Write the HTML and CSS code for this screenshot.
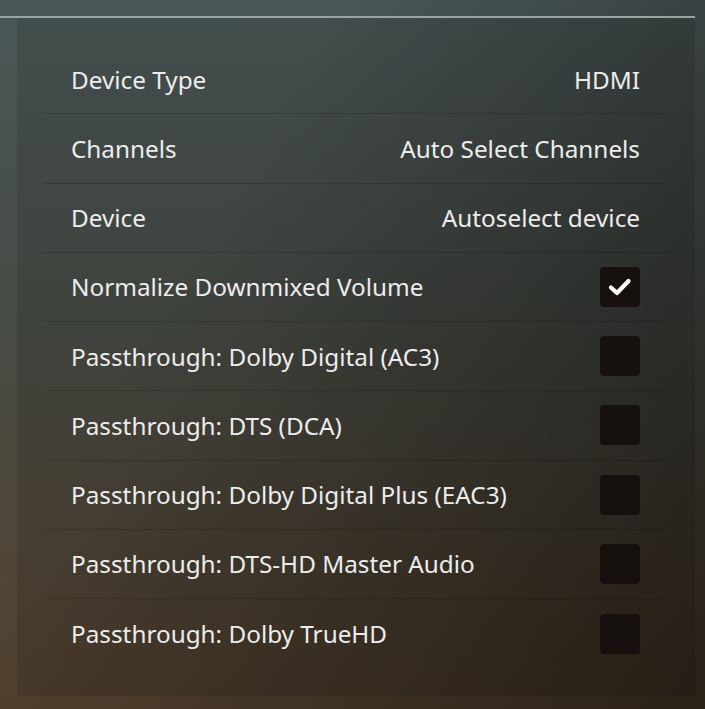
FILE: index.html
```html
<!DOCTYPE html>
<html>
<head>
<meta charset="utf-8">
<link rel="stylesheet" href="styles.css">
</head>
<body>
<div class="screen">
  <div class="topline"></div>
  <div class="panel">
    <div class="list">
      <div class="row"><span class="label">Device Type</span><span class="value">HDMI</span></div>
      <div class="row"><span class="label">Channels</span><span class="value">Auto Select Channels</span></div>
      <div class="row"><span class="label">Device</span><span class="value">Autoselect device</span></div>
      <div class="row"><span class="label">Normalize Downmixed Volume</span>
        <span class="check">
          <svg width="28" height="28" viewBox="0 0 28 28"><path d="M5 14.5 L11 20 L22.5 8" fill="none" stroke="#fff" stroke-width="4.2" stroke-linecap="round" stroke-linejoin="round"/></svg>
        </span>
      </div>
      <div class="row"><span class="label">Passthrough: Dolby Digital (AC3)</span><span class="check"></span></div>
      <div class="row"><span class="label">Passthrough: DTS (DCA)</span><span class="check"></span></div>
      <div class="row"><span class="label">Passthrough: Dolby Digital Plus (EAC3)</span><span class="check"></span></div>
      <div class="row"><span class="label">Passthrough: DTS-HD Master Audio</span><span class="check"></span></div>
      <div class="row"><span class="label">Passthrough: Dolby TrueHD</span><span class="check"></span></div>
    </div>
  </div>
</div>
</body>
</html>
```
FILE: styles.css
```css
html, body {
  margin: 0;
  padding: 0;
}
body {
  width: 705px;
  height: 709px;
  overflow: hidden;
  font-family: "Noto Sans", "Open Sans", sans-serif;
  background:
    linear-gradient(120deg, rgba(0,0,0,0) 30%, rgba(0,0,0,0.25) 65%, rgba(0,0,0,0.5) 100%),
    linear-gradient(to bottom, #4a5757 0%, #474b45 45%, #54422f 100%);
}
.screen {
  padding-top: 16px;
}
.topline {
  width: 695px;
  height: 2px;
  background: #9aa3a2;
}
.panel {
  margin-left: 17px;
  width: 678px;
  height: 678px;
  box-sizing: border-box;
  padding: 27px 28px 0 27px;
  background: rgba(0,0,0,0.1);
}
.list {
  display: flex;
  flex-direction: column;
}
.row {
  height: 69.25px;
  box-sizing: border-box;
  display: flex;
  align-items: center;
  justify-content: space-between;
  padding: 0 27px;
  border-bottom: 1px solid rgba(0,0,0,0.16);
  color: #ececec;
  font-size: 24.3px;
}
.row:last-child {
  border-bottom: none;
}
.check {
  width: 40px;
  height: 40px;
  border-radius: 4px;
  background: #16110e;
  display: flex;
  align-items: center;
  justify-content: center;
}
```
